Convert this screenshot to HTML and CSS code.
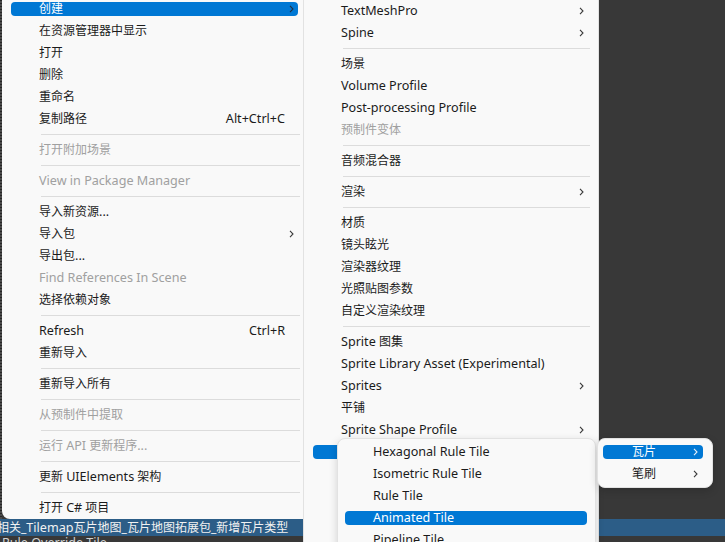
FILE: index.html
```html
<!DOCTYPE html>
<html lang="zh-CN">
<head>
<meta charset="utf-8">
<title>Assets context menu</title>
<link rel="stylesheet" href="styles.css">
</head>
<body>
<div class="editor">
  <div class="editor-top">
    <div class="splitter"></div>
  </div>
  <div class="asset-list">
    <div class="asset-row selected"><span class="asset-name">相关_<span class="en">Tilemap</span>瓦片地图_瓦片地图拓展包_新增瓦片类型</span></div>
    <div class="asset-row top-aligned"><span class="asset-name second"><span class="en">Rule Override Tile</span></span></div>
  </div>
</div>

<div class="menu menu-main">
  <div class="item active"><div class="item-inner"><span class="label">创建</span><svg class="chev" width="5" height="8" viewBox="0 0 5 8"><path d="M1 0.8L4 4L1 7.2" fill="none" stroke="currentColor" stroke-width="1.1"/></svg></div></div>
  <div class="item"><div class="item-inner"><span class="label">在资源管理器中显示</span></div></div>
  <div class="item"><div class="item-inner"><span class="label">打开</span></div></div>
  <div class="item"><div class="item-inner"><span class="label">删除</span></div></div>
  <div class="item"><div class="item-inner"><span class="label">重命名</span></div></div>
  <div class="item"><div class="item-inner"><span class="label">复制路径</span><span class="shortcut en">Alt+Ctrl+C</span></div></div>
  <div class="sep"></div>
  <div class="item disabled"><div class="item-inner"><span class="label">打开附加场景</span></div></div>
  <div class="sep"></div>
  <div class="item disabled"><div class="item-inner"><span class="label en">View in Package Manager</span></div></div>
  <div class="sep"></div>
  <div class="item"><div class="item-inner"><span class="label">导入新资源<span class="en">...</span></span></div></div>
  <div class="item"><div class="item-inner"><span class="label">导入包</span><svg class="chev" width="5" height="8" viewBox="0 0 5 8"><path d="M1 0.8L4 4L1 7.2" fill="none" stroke="currentColor" stroke-width="1.1"/></svg></div></div>
  <div class="item"><div class="item-inner"><span class="label">导出包<span class="en">...</span></span></div></div>
  <div class="item disabled"><div class="item-inner"><span class="label en">Find References In Scene</span></div></div>
  <div class="item"><div class="item-inner"><span class="label">选择依赖对象</span></div></div>
  <div class="sep"></div>
  <div class="item"><div class="item-inner"><span class="label en">Refresh</span><span class="shortcut en">Ctrl+R</span></div></div>
  <div class="item"><div class="item-inner"><span class="label">重新导入</span></div></div>
  <div class="sep"></div>
  <div class="item"><div class="item-inner"><span class="label">重新导入所有</span></div></div>
  <div class="sep"></div>
  <div class="item disabled"><div class="item-inner"><span class="label">从预制件中提取</span></div></div>
  <div class="sep"></div>
  <div class="item disabled"><div class="item-inner"><span class="label">运行 <span class="en">API</span> 更新程序<span class="en">...</span></span></div></div>
  <div class="sep"></div>
  <div class="item"><div class="item-inner"><span class="label">更新 <span class="en">UIElements</span> 架构</span></div></div>
  <div class="sep"></div>
  <div class="item"><div class="item-inner"><span class="label">打开 <span class="en">C#</span> 项目</span></div></div>
</div>

<div class="menu menu-create">
  <div class="item"><div class="item-inner"><span class="label en">TextMeshPro</span><svg class="chev" width="5" height="8" viewBox="0 0 5 8"><path d="M1 0.8L4 4L1 7.2" fill="none" stroke="currentColor" stroke-width="1.1"/></svg></div></div>
  <div class="item"><div class="item-inner"><span class="label en">Spine</span><svg class="chev" width="5" height="8" viewBox="0 0 5 8"><path d="M1 0.8L4 4L1 7.2" fill="none" stroke="currentColor" stroke-width="1.1"/></svg></div></div>
  <div class="sep"></div>
  <div class="item"><div class="item-inner"><span class="label">场景</span></div></div>
  <div class="item"><div class="item-inner"><span class="label en">Volume Profile</span></div></div>
  <div class="item"><div class="item-inner"><span class="label en">Post-processing Profile</span></div></div>
  <div class="item disabled"><div class="item-inner"><span class="label">预制件变体</span></div></div>
  <div class="sep"></div>
  <div class="item"><div class="item-inner"><span class="label">音频混合器</span></div></div>
  <div class="sep"></div>
  <div class="item"><div class="item-inner"><span class="label">渲染</span><svg class="chev" width="5" height="8" viewBox="0 0 5 8"><path d="M1 0.8L4 4L1 7.2" fill="none" stroke="currentColor" stroke-width="1.1"/></svg></div></div>
  <div class="sep"></div>
  <div class="item"><div class="item-inner"><span class="label">材质</span></div></div>
  <div class="item"><div class="item-inner"><span class="label">镜头眩光</span></div></div>
  <div class="item"><div class="item-inner"><span class="label">渲染器纹理</span></div></div>
  <div class="item"><div class="item-inner"><span class="label">光照贴图参数</span></div></div>
  <div class="item"><div class="item-inner"><span class="label">自定义渲染纹理</span></div></div>
  <div class="sep"></div>
  <div class="item"><div class="item-inner"><span class="label"><span class="en">Sprite</span> 图集</span></div></div>
  <div class="item"><div class="item-inner"><span class="label en">Sprite Library Asset (Experimental)</span></div></div>
  <div class="item"><div class="item-inner"><span class="label en">Sprites</span><svg class="chev" width="5" height="8" viewBox="0 0 5 8"><path d="M1 0.8L4 4L1 7.2" fill="none" stroke="currentColor" stroke-width="1.1"/></svg></div></div>
  <div class="item"><div class="item-inner"><span class="label">平铺</span></div></div>
  <div class="item"><div class="item-inner"><span class="label en">Sprite Shape Profile</span><svg class="chev" width="5" height="8" viewBox="0 0 5 8"><path d="M1 0.8L4 4L1 7.2" fill="none" stroke="currentColor" stroke-width="1.1"/></svg></div></div>
  <div class="item active"><div class="item-inner"><span class="label en">2D</span><svg class="chev" width="5" height="8" viewBox="0 0 5 8"><path d="M1 0.8L4 4L1 7.2" fill="none" stroke="currentColor" stroke-width="1.1"/></svg></div></div>
  <div class="item"><div class="item-inner"><span class="label">视觉效果</span></div></div>
  <div class="item"><div class="item-inner"><span class="label">着色器</span></div></div>
  <div class="item"><div class="item-inner"><span class="label">测试</span></div></div>
</div>

<div class="menu menu-tiles">
  <div class="item"><div class="item-inner"><span class="label en">Hexagonal Rule Tile</span></div></div>
  <div class="item"><div class="item-inner"><span class="label en">Isometric Rule Tile</span></div></div>
  <div class="item"><div class="item-inner"><span class="label en">Rule Tile</span></div></div>
  <div class="item active"><div class="item-inner"><span class="label en">Animated Tile</span></div></div>
  <div class="item"><div class="item-inner"><span class="label en">Pipeline Tile</span></div></div>
  <div class="item"><div class="item-inner"><span class="label en">Random Tile</span></div></div>
</div>

<div class="menu menu-palette">
  <div class="item active"><div class="item-inner"><span class="label">瓦片</span><svg class="chev" width="5" height="8" viewBox="0 0 5 8"><path d="M1 0.8L4 4L1 7.2" fill="none" stroke="currentColor" stroke-width="1.1"/></svg></div></div>
  <div class="item"><div class="item-inner"><span class="label">笔刷</span><svg class="chev" width="5" height="8" viewBox="0 0 5 8"><path d="M1 0.8L4 4L1 7.2" fill="none" stroke="currentColor" stroke-width="1.1"/></svg></div></div>
</div>
</body>
</html>
```

FILE: styles.css
```css
* {
  box-sizing: border-box;
  margin: 0;
  padding: 0;
}

html, body {
  width: 725px;
  height: 542px;
  overflow: hidden;
}

body {
  position: relative;
  background: #383838;
  font-family: "Noto Sans", "Noto Sans CJK SC", sans-serif;
  font-size: 12px;
  line-height: 14px;
}

.en {
  font-size: 12.6px;
}

/* ---------- underlying editor ---------- */
.editor {
  display: flex;
  flex-direction: column;
  height: 542px;
}

.editor-top {
  flex: none;
  height: 519px;
  display: flex;
}

.asset-list {
  flex: none;
}

.splitter {
  width: 2px;
  height: 100%;
  background: repeating-linear-gradient(to bottom, #262626 0 1px, #4a4a4a 1px 3px);
}

.asset-row {
  height: 17px;
  display: flex;
  align-items: center;
  white-space: nowrap;
  overflow: hidden;
  color: #d2d2d2;
}

.asset-row.top-aligned {
  align-items: flex-start;
}

.asset-row.selected {
  background: #2c5d87;
  color: #f2f2f2;
}

.asset-name {
  margin-left: -3px;
}

.asset-name.second {
  margin-left: 2px;
}

/* ---------- menus ---------- */
.menu {
  position: absolute;
  background: #f9f9f9;
  color: #1b1b1b;
}

.menu-main {
  left: 2px;
  top: -6px;
  width: 301px;
  padding: 4px 0 0;
  border-bottom-left-radius: 8px;
}

.menu-create {
  left: 303px;
  top: -4px;
  width: 296px;
  height: 580px;
  padding-top: 4px;
  border-left: 1px solid #e2e2e2;
  border-right: 1px solid #e2e2e2;
}

.menu-tiles {
  left: 337px;
  top: 438px;
  width: 259px;
  height: 140px;
  padding-top: 2px;
  border: 1px solid #e2e2e2;
  border-radius: 8px;
  box-shadow: 0 3px 9px rgba(0, 0, 0, 0.16);
}

.menu-palette {
  left: 597px;
  top: 438px;
  width: 116px;
  padding: 2px 0;
  border: 1px solid #e2e2e2;
  border-radius: 8px;
  box-shadow: 0 3px 9px rgba(0, 0, 0, 0.16);
}

.item {
  padding: 4px 5px 4px 9px;
}

.item-inner {
  height: 14px;
  display: flex;
  align-items: center;
  padding: 0 4px 0 28px;
  border-radius: 4px;
  white-space: nowrap;
}

.label {
  flex: 1;
}

.shortcut {
  padding-right: 9px;
}

.chev {
  display: block;
  color: #3a3a3a;
}

.item.active .item-inner {
  background: #0078d4;
  color: #ffffff;
}

.item.active .chev {
  color: #1d2f44;
}

.item.disabled {
  color: #a0a0a0;
}

.sep {
  height: 1px;
  margin: 4px 3px 4px 39px;
  background: #dcdcdc;
}

.menu-create .item {
  padding-right: 5px;
}

.menu-create .item-inner {
  padding-right: 9px;
}

.menu-create .sep {
  margin: 4px 8px 4px 39px;
}

.menu-tiles .item {
  padding: 4px 8px 4px 7px;
}

.menu-palette .item {
  padding: 4px 9px 4px 5px;
}

.menu-palette .item-inner {
  padding: 0 5px 0 29px;
}

.menu-palette .item.active .chev {
  color: #e8f0f8;
}
```
